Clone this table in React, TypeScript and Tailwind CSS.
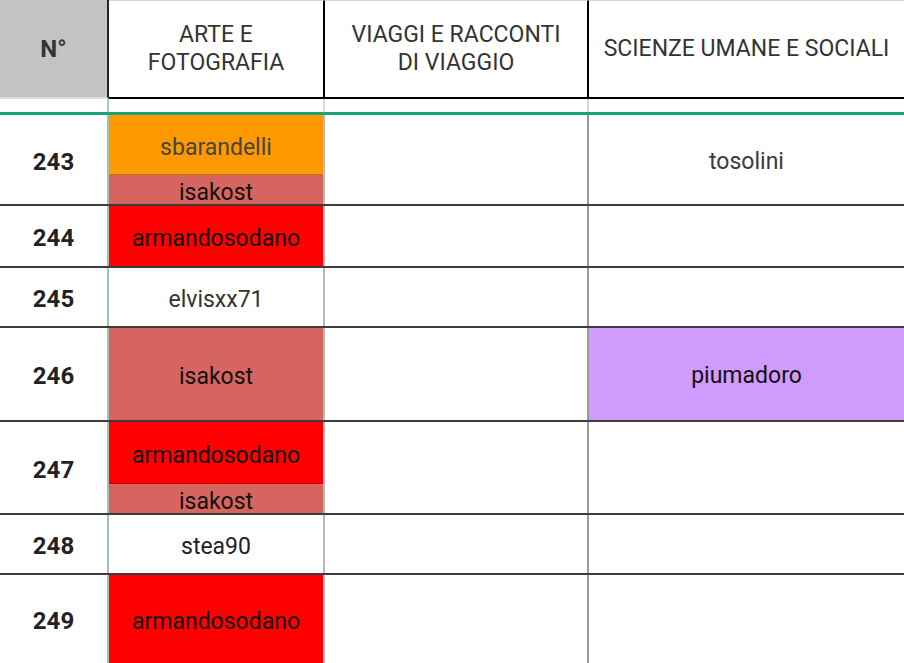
const FONT = "font-['Roboto','Liberation_Sans',sans-serif]";

type Seg = { name: string; bg?: string; text?: string; h?: string };

interface Row {
  n: number;
  height: string;
  arte: Seg[];
  scienze?: Seg;
}

const ROWS: Row[] = [
  {
    n: 243,
    height: 'h-[91px]',
    arte: [
      { name: 'sbarandelli', bg: 'bg-[#ff9900]', text: 'text-[#454545]', h: 'h-[60px] border-b border-black/25' },
      { name: 'isakost', bg: 'bg-[#d6645f]', text: 'text-[#111]', h: 'flex-1' },
    ],
    scienze: { name: 'tosolini', text: 'text-[#3a3a3a]' },
  },
  {
    n: 244,
    height: 'h-[62px]',
    arte: [{ name: 'armandosodano', bg: 'bg-[#ff0000]', text: 'text-[#111]', h: 'flex-1' }],
  },
  {
    n: 245,
    height: 'h-[60px]',
    arte: [{ name: 'elvisxx71', text: 'text-[#333]', h: 'flex-1' }],
  },
  {
    n: 246,
    height: 'h-[94px]',
    arte: [{ name: 'isakost', bg: 'bg-[#d6645f]', text: 'text-[#111]', h: 'flex-1' }],
    scienze: { name: 'piumadoro', bg: 'bg-[#d09bfd]', text: 'text-[#111]' },
  },
  {
    n: 247,
    height: 'h-[93px]',
    arte: [
      { name: 'armandosodano', bg: 'bg-[#ff0000]', text: 'text-[#111]', h: 'h-[62px] border-b border-black/20' },
      { name: 'isakost', bg: 'bg-[#d6645f]', text: 'text-[#111]', h: 'flex-1' },
    ],
  },
  {
    n: 248,
    height: 'h-[60px]',
    arte: [{ name: 'stea90', text: 'text-[#222]', h: 'flex-1' }],
  },
  {
    n: 249,
    height: 'h-[90px]',
    arte: [{ name: 'armandosodano', bg: 'bg-[#ff0000]', text: 'text-[#111]', h: 'flex-1' }],
  },
];

export default function App() {
  return (
    <div className={`w-[904px] h-[663px] overflow-hidden bg-white ${FONT}`}>
      {/* Header */}
      <div className="flex h-[99px] text-[23px] leading-[28px] text-[#333] text-center">
        <div className="w-[109px] shrink-0 bg-[#c3c3c3] border-r-2 border-b-2 border-r-[#1d2a24] border-b-[#dedede] flex items-center justify-center font-bold text-[24px]">
          N°
        </div>
        <div className="w-[216px] shrink-0 border-t border-t-[#d4d4d4] border-b-2 border-r-2 border-black flex items-center justify-center">
          ARTE E<br />FOTOGRAFIA
        </div>
        <div className="w-[264px] shrink-0 border-t border-t-[#d4d4d4] border-b-2 border-r-2 border-black flex items-start justify-center pt-[20px]">
          VIAGGI E RACCONTI<br />DI VIAGGIO
        </div>
        <div className="flex-1 border-t border-t-[#d4d4d4] border-b-2 border-black flex items-center justify-center whitespace-nowrap">
          SCIENZE UMANE E SOCIALI
        </div>
      </div>

      {/* Gap under frozen header */}
      <div className="flex h-[13px]">
        <div className="w-[109px] shrink-0 border-r-2 border-[#a9cbbb]" />
        <div className="w-[216px] shrink-0 border-r-2 border-[#dcdcdc]" />
        <div className="w-[264px] shrink-0 border-r-2 border-[#d6d6d6]" />
        <div className="flex-1" />
      </div>
      <div className="h-[3px] bg-[#14a37a]" />

      {/* Body */}
      {ROWS.map(row => (
        <div key={row.n} className={`flex ${row.height} border-b-2 border-[#3c3c3c] text-[23px]`}>
          <div className="w-[109px] shrink-0 border-r-2 border-[#9dc4b2] flex items-center justify-center pt-[4px] font-bold text-[24px] text-[#222]">
            {row.n}
          </div>
          <div className="w-[216px] shrink-0 border-r-2 border-[#b8b8b8] flex flex-col">
            {row.arte.map((s, i) => (
              <div
                key={i}
                className={`${s.h} ${s.bg ?? ''} ${s.text ?? ''} flex items-center justify-center pt-[5px] leading-[27px] overflow-hidden`}
              >
                {s.name}
              </div>
            ))}
          </div>
          <div className="w-[264px] shrink-0 border-r-2 border-[#9a9a9a]" />
          <div
            className={`flex-1 flex items-center justify-center pt-[5px] ${row.scienze?.bg ?? ''} ${row.scienze?.text ?? ''}`}
          >
            {row.scienze?.name}
          </div>
        </div>
      ))}
    </div>
  );
}
